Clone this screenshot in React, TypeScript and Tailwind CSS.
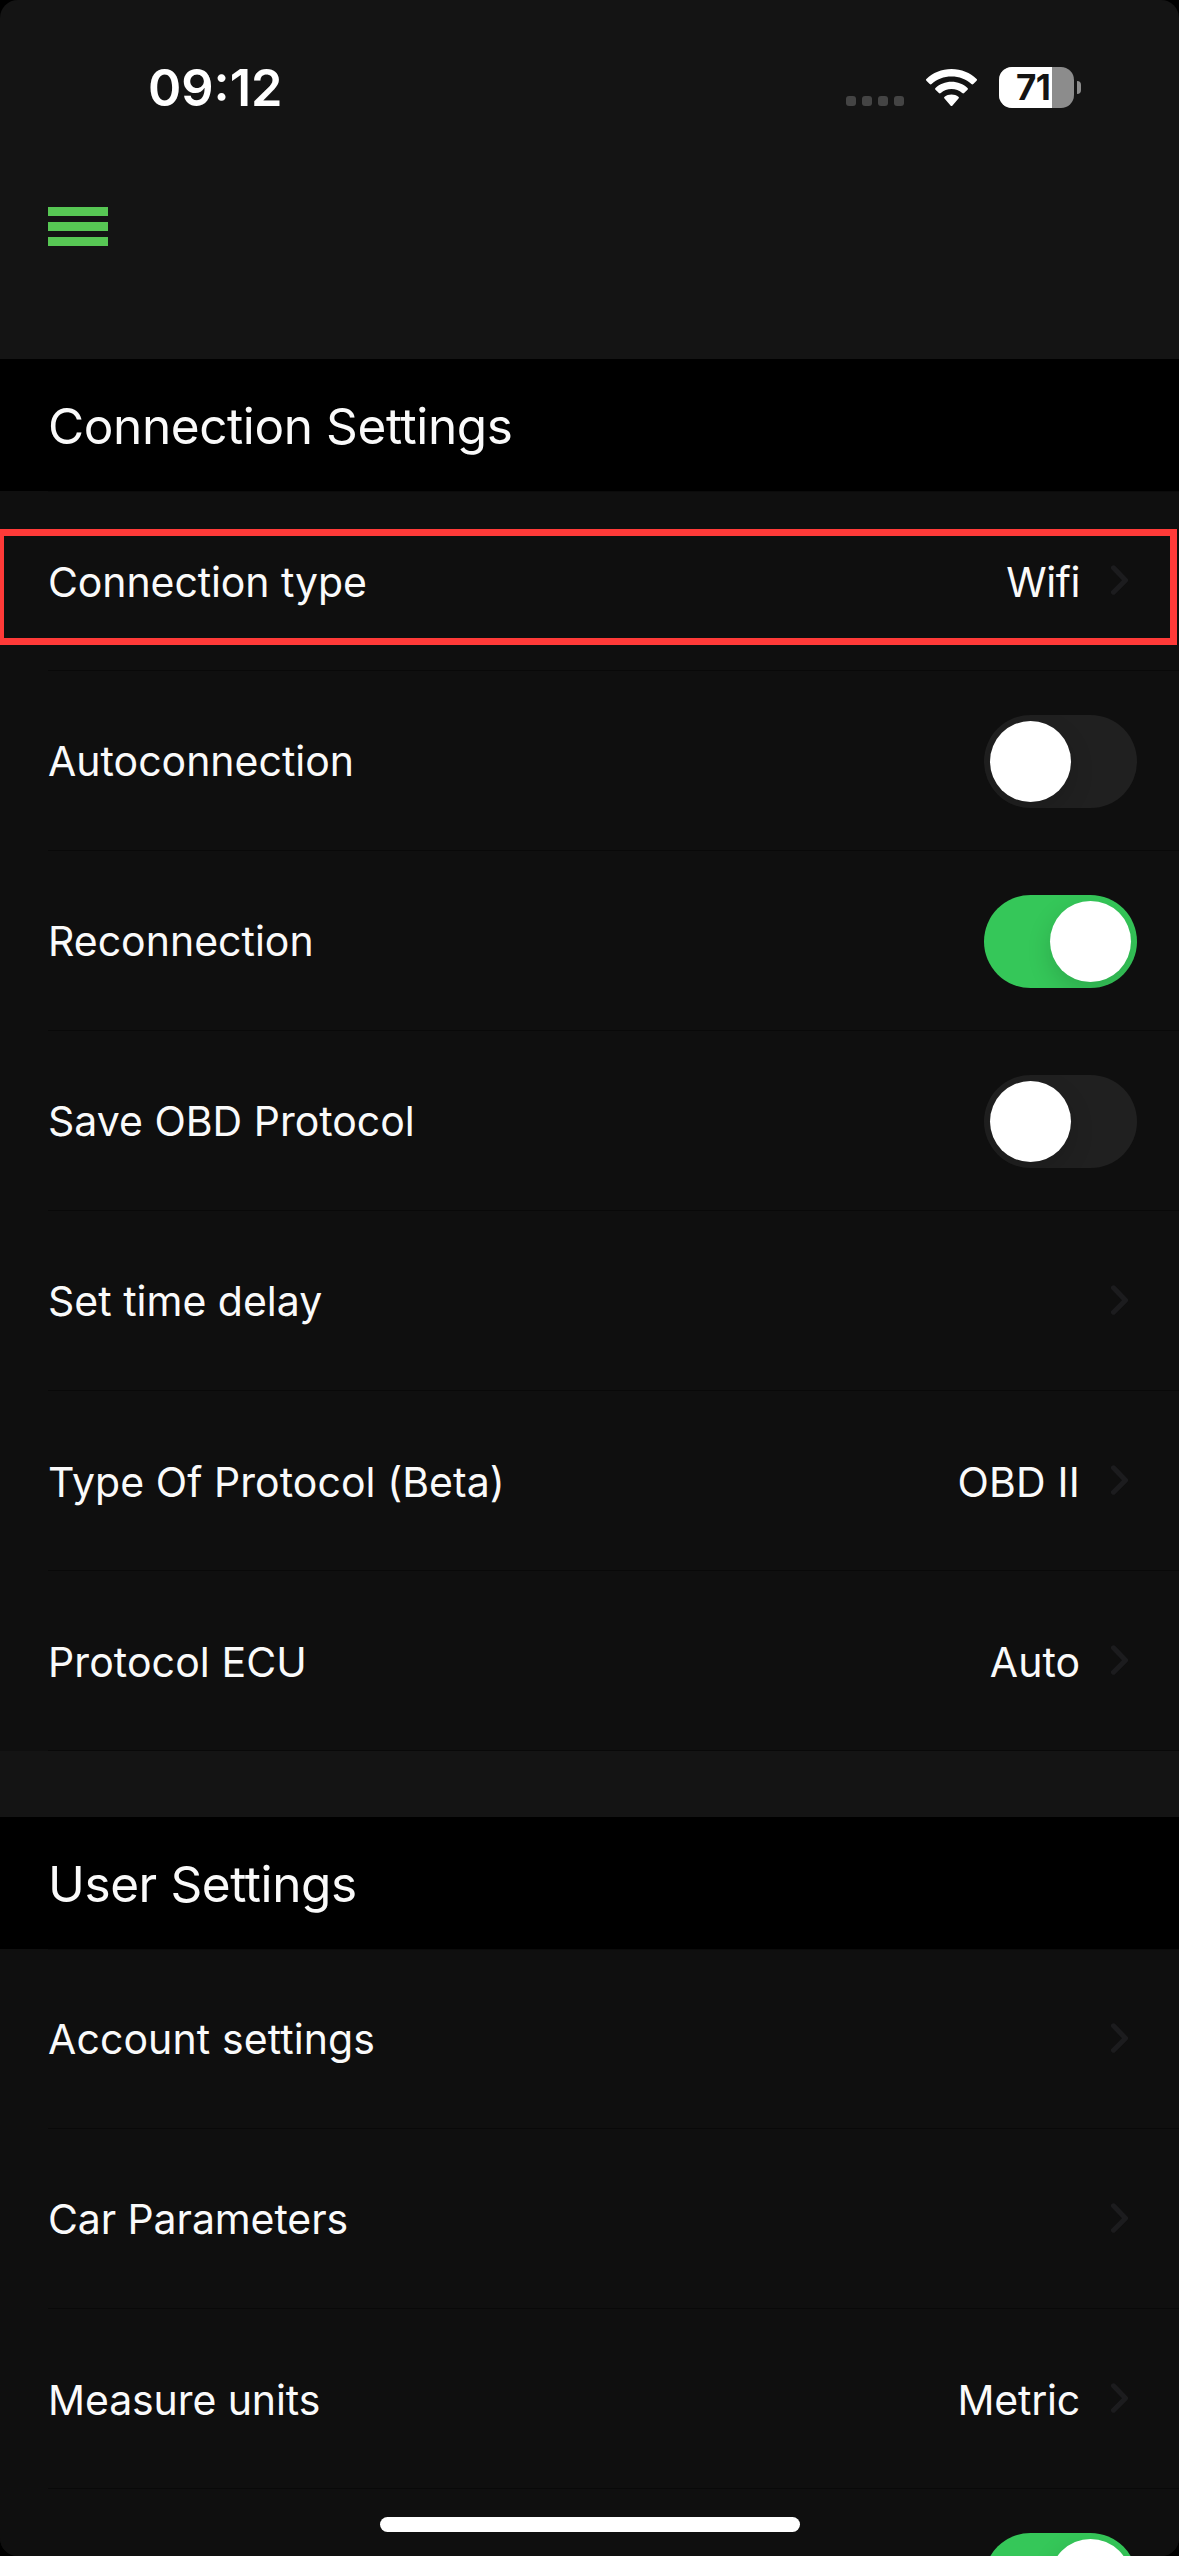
import { useState } from 'react';

type SettingRow = {
    label: string;
    value?: string;
    toggle?: boolean;
    tracking?: string;
    valueTracking?: string;
    highlighted?: boolean;
};

const connectionRows: SettingRow[] = [
    { label: 'Connection type', value: 'Wifi', tracking: 'tracking-[-0.1px]', valueTracking: 'tracking-[-0.4px]', highlighted: true },
    { label: 'Autoconnection', toggle: false },
    { label: 'Reconnection', toggle: true },
    { label: 'Save OBD Protocol', toggle: false },
    { label: 'Set time delay' },
    { label: 'Type Of Protocol (Beta)', value: 'OBD II', tracking: 'tracking-[0.06px]', valueTracking: 'tracking-[0.2px]' },
    { label: 'Protocol ECU', value: 'Auto', tracking: 'tracking-[0.1px]' },
];

const userRows: SettingRow[] = [
    { label: 'Account settings', tracking: 'tracking-[0.1px]' },
    { label: 'Car Parameters', tracking: 'tracking-[-0.1px]' },
    { label: 'Measure units', value: 'Metric', tracking: 'tracking-[-0.1px]', valueTracking: 'tracking-[-0.2px]' },
    { label: '', toggle: true },
];

function StatusBar() {
    return (
        <div className="flex h-[177px] shrink-0 items-start justify-between pr-[98px] pl-[148px] text-white">
            <span className="mt-[58px] text-[50.5px] leading-[60px] font-semibold">09:12</span>
            <div className="mt-[67px] flex h-[41px] items-start">
                <div className="mt-[29px] flex gap-1.5">
                    {[0, 1, 2, 3].map((i) => (
                        <span key={i} className="size-2.5 rounded-[3px] bg-[#444]" />
                    ))}
                </div>
                <svg className="mt-0.5 ml-[22px]" width="51" height="38" viewBox="0 0 51 38" fill="#fff">
                    <path d="M25.5 0C35.4 0 44.2 3.8 50.6 9.9c.6.6.6 1.2 0 1.8l-3.3 3.4c-.6.6-1.3.6-1.9 0C40.1 10.2 33.2 7.6 25.5 7.6S10.9 10.2 5.6 15.1c-.6.6-1.3.6-1.9 0L.4 11.7c-.6-.6-.6-1.2 0-1.8C6.8 3.8 15.6 0 25.5 0z" />
                    <path d="M25.5 12.7c6.2 0 11.8 2.3 16 6.2.6.6.6 1.2 0 1.8l-3.4 3.4c-.6.6-1.2.6-1.9 0-2.9-2.5-6.6-4-10.7-4s-7.8 1.5-10.7 4c-.7.6-1.3.6-1.9 0l-3.4-3.4c-.6-.6-.6-1.2 0-1.8 4.2-3.9 9.8-6.2 16-6.2z" />
                    <path d="M25.5 25.5c2.7 0 5 .9 6.900 2.300.7.600.7 1.200.1 1.800l-6 6.900c-.6.700-1.400.700-2 0l-6-6.900c-.6-.6-.6-1.200.1-1.800 1.900-1.400 4.200-2.300 6.900-2.300z" />
                </svg>
                <div className="ml-[22px] flex items-center">
                    <div className="relative h-[41px] w-[75px] overflow-hidden rounded-[13px] bg-[#8c8c8c]">
                        <div className="h-full w-[53px] bg-white" />
                        <span className="absolute top-0 left-[17px] text-[35px] leading-[41px] font-bold tracking-[-0.6px] text-[#141414]">71</span>
                    </div>
                    <div className="ml-[3px] h-[13px] w-1 rounded-r-full bg-[#8c8c8c]" />
                </div>
            </div>
        </div>
    );
}

function Toggle({ defaultOn }: { defaultOn: boolean }) {
    const [on, setOn] = useState(defaultOn);

    return (
        <button
            role="switch"
            aria-checked={on}
            onClick={() => setOn(!on)}
            className={`flex h-[93px] w-[153px] shrink-0 overflow-hidden rounded-full p-1.5 ${on ? 'justify-end bg-[#35c759]' : 'justify-start bg-[#202020]'}`}
        >
            <span className="size-[81px] rounded-full bg-white shadow-[0_9px_24px_rgba(0,0,0,0.15)]" />
        </button>
    );
}

function Chevron() {
    return (
        <svg className="mt-[74px] mr-[9px] ml-[31px] shrink-0" width="17" height="30" viewBox="0 0 17 30" fill="none" stroke="#1c1c1e" strokeWidth="5" strokeLinecap="round" strokeLinejoin="round">
            <path d="M2.5 2.8L14.5 15.2L2.5 27.2" />
        </svg>
    );
}

function Row({ row, first }: { row: SettingRow; first: boolean }) {
    return (
        <div className="relative h-[180px] shrink-0 bg-[#0f0f0f] pl-12">
            <div className={`flex h-full items-start justify-between border-b border-b-[#090909] pr-[42px] ${first ? 'border-t border-t-[#0b0b0b]' : ''}`}>
                <div className={first ? '-mt-px' : ''}>
                    <span className={`block text-[41px] leading-[60px] text-[#fafafa] ${row.value ? 'mt-[61px]' : 'mt-[60px]'} ${row.tracking ?? ''}`}>{row.label}</span>
                </div>
                {row.toggle !== undefined ? (
                    <div className="mt-11">
                        <Toggle defaultOn={row.toggle} />
                    </div>
                ) : (
                    <div className={`flex items-start ${first ? '-mt-px' : ''}`}>
                        <span className={`mt-[61px] text-[41px] leading-[60px] text-[#fafafa] ${row.valueTracking ?? ''}`}>{row.value}</span>
                        <Chevron />
                    </div>
                )}
            </div>
            {row.highlighted && (
                <div className="absolute top-[38px] right-[2px] -left-[3px] h-[116px] border-[7px] border-[#ff3a38]" />
            )}
        </div>
    );
}

function Section({ title, rows }: { title: string; rows: SettingRow[] }) {
    return (
        <section className="flex shrink-0 flex-col">
            <h2 className="h-[132px] bg-black pt-[37px] pl-12 text-[49.5px] leading-[60px] tracking-[-0.4px] text-[#fafafa]">{title}</h2>
            {rows.map((row, i) => (
                <Row key={i} row={row} first={i === 0} />
            ))}
        </section>
    );
}

export default function App() {
    return (
        <div className="h-[2556px] w-[1179px] overflow-hidden bg-black font-[Inter,sans-serif]">
            <div className="relative flex h-full flex-col overflow-hidden rounded-[18px] bg-[#141414]">
                <StatusBar />
                <header className="flex h-[182px] shrink-0 items-start pt-[30px] pl-12">
                    <button aria-label="Menu" className="flex flex-col gap-1.5">
                        <span className="h-[9px] w-[60px] bg-[#57c754]" />
                        <span className="h-[9px] w-[60px] bg-[#57c754]" />
                        <span className="h-[9px] w-[60px] bg-[#57c754]" />
                    </button>
                </header>
                <main className="flex flex-col gap-[66px]">
                    <Section title="Connection Settings" rows={connectionRows} />
                    <Section title="User Settings" rows={userRows} />
                </main>
                {/* Home indicator */}
                <div className="absolute bottom-6 left-[380px] h-[15px] w-[420px] rounded-full bg-white" />
            </div>
        </div>
    );
}
